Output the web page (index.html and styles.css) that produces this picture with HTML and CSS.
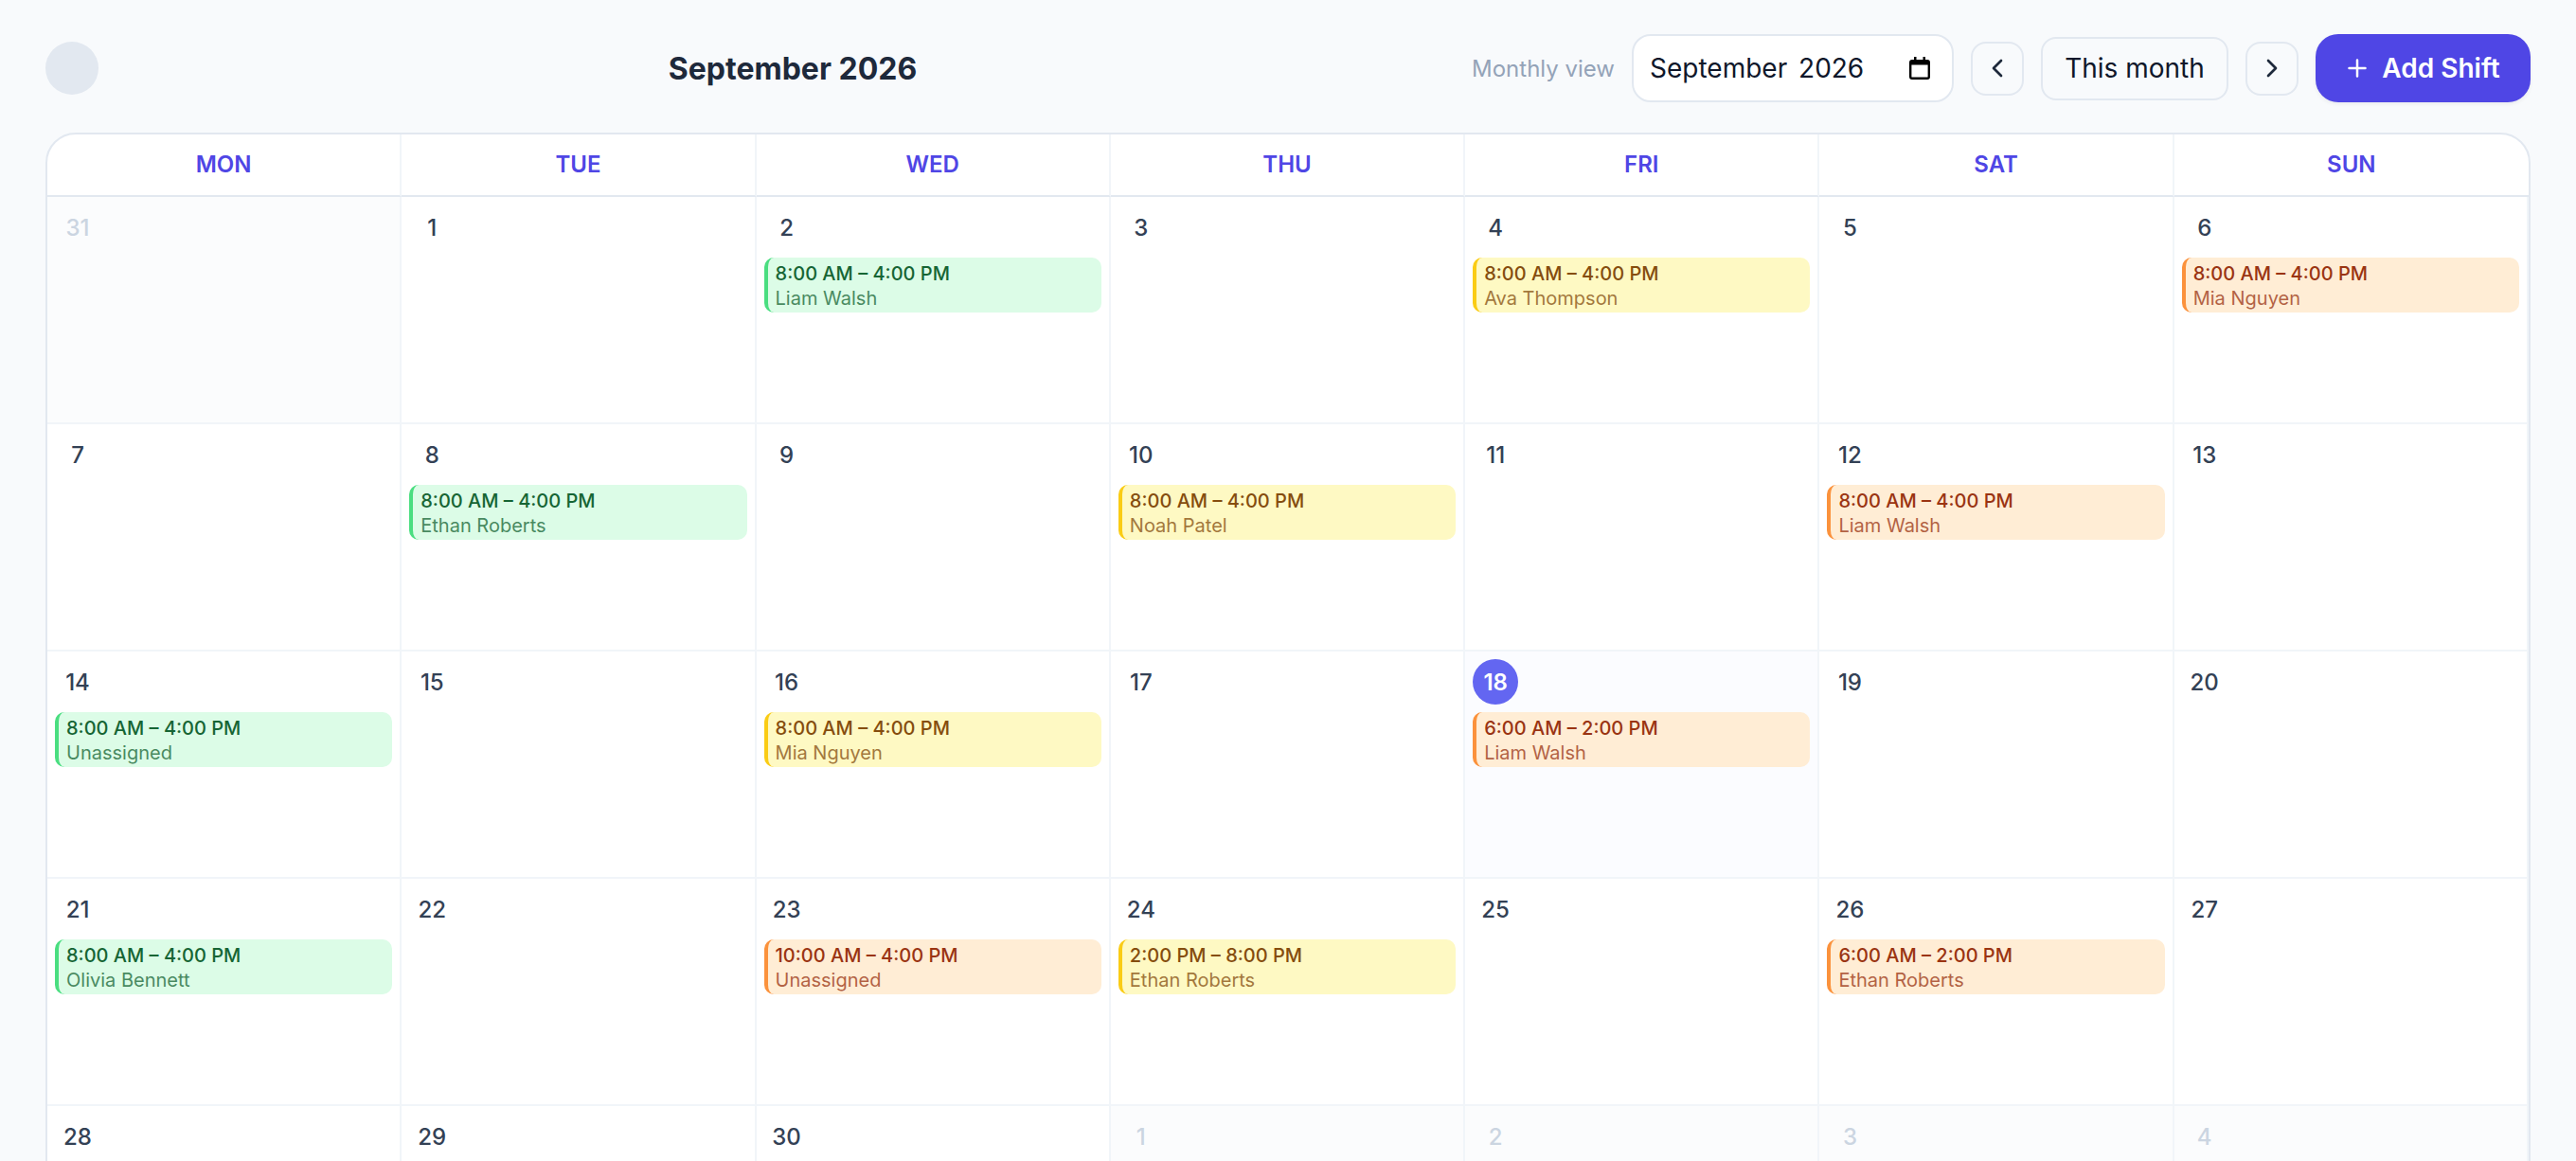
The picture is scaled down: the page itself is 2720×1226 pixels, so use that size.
FILE: index.html

```html
<!DOCTYPE html>
<html lang="en">
<head>
    <meta charset="UTF-8">
    <meta name="viewport" content="width=device-width, initial-scale=1.0">
    <title>Shift Calendar</title>
    <link rel="stylesheet" href="styles.css">
</head>
<body>
    <header class="topbar">
        <div class="avatar"></div>
        <h1 class="month-title">September 2026</h1>
        <div class="controls">
            <span class="view-label">Monthly view</span>
            <div class="month-input">
                <span class="month-value">September 2026</span>
                <svg class="cal-icon" width="22" height="24" viewBox="0 0 22 24"><path d="M5 0h2.5v3h7V0H17v3h2a3 3 0 0 1 3 3v15a3 3 0 0 1-3 3H3a3 3 0 0 1-3-3V6a3 3 0 0 1 3-3h2zM2.4 8.5V21a.6.6 0 0 0 .6.6h16a.6.6 0 0 0 .6-.6V8.5z" fill-rule="evenodd"/></svg>
            </div>
            <button class="nav-btn" aria-label="Previous month">
                <svg width="32" height="32" viewBox="0 0 24 24"><path d="M15 18l-6-6 6-6"/></svg>
            </button>
            <button class="today-btn">This month</button>
            <button class="nav-btn" aria-label="Next month">
                <svg width="32" height="32" viewBox="0 0 24 24"><path d="M9 18l6-6-6-6"/></svg>
            </button>
            <button class="add-btn">
                <svg width="24" height="24" viewBox="0 0 24 24"><path d="M12 3.5v17M3.5 12h17"/></svg>
                Add Shift
            </button>
        </div>
    </header>

    <div class="calendar">
        <div class="day-name">MON</div>
        <div class="day-name">TUE</div>
        <div class="day-name">WED</div>
        <div class="day-name">THU</div>
        <div class="day-name">FRI</div>
        <div class="day-name">SAT</div>
        <div class="day-name">SUN</div>

        <div class="cell outside"><div class="day-num">31</div></div>
        <div class="cell"><div class="day-num">1</div></div>
        <div class="cell"><div class="day-num">2</div>
            <div class="shift green"><div class="shift-time">8:00 AM – 4:00 PM</div><div class="shift-name">Liam Walsh</div></div>
        </div>
        <div class="cell"><div class="day-num">3</div></div>
        <div class="cell"><div class="day-num">4</div>
            <div class="shift yellow"><div class="shift-time">8:00 AM – 4:00 PM</div><div class="shift-name">Ava Thompson</div></div>
        </div>
        <div class="cell"><div class="day-num">5</div></div>
        <div class="cell"><div class="day-num">6</div>
            <div class="shift orange"><div class="shift-time">8:00 AM – 4:00 PM</div><div class="shift-name">Mia Nguyen</div></div>
        </div>

        <div class="cell"><div class="day-num">7</div></div>
        <div class="cell"><div class="day-num">8</div>
            <div class="shift green"><div class="shift-time">8:00 AM – 4:00 PM</div><div class="shift-name">Ethan Roberts</div></div>
        </div>
        <div class="cell"><div class="day-num">9</div></div>
        <div class="cell"><div class="day-num">10</div>
            <div class="shift yellow"><div class="shift-time">8:00 AM – 4:00 PM</div><div class="shift-name">Noah Patel</div></div>
        </div>
        <div class="cell"><div class="day-num">11</div></div>
        <div class="cell"><div class="day-num">12</div>
            <div class="shift orange"><div class="shift-time">8:00 AM – 4:00 PM</div><div class="shift-name">Liam Walsh</div></div>
        </div>
        <div class="cell"><div class="day-num">13</div></div>

        <div class="cell"><div class="day-num">14</div>
            <div class="shift green"><div class="shift-time">8:00 AM – 4:00 PM</div><div class="shift-name">Unassigned</div></div>
        </div>
        <div class="cell"><div class="day-num">15</div></div>
        <div class="cell"><div class="day-num">16</div>
            <div class="shift yellow"><div class="shift-time">8:00 AM – 4:00 PM</div><div class="shift-name">Mia Nguyen</div></div>
        </div>
        <div class="cell"><div class="day-num">17</div></div>
        <div class="cell today"><div class="day-num">18</div>
            <div class="shift orange"><div class="shift-time">6:00 AM – 2:00 PM</div><div class="shift-name">Liam Walsh</div></div>
        </div>
        <div class="cell"><div class="day-num">19</div></div>
        <div class="cell"><div class="day-num">20</div></div>

        <div class="cell"><div class="day-num">21</div>
            <div class="shift green"><div class="shift-time">8:00 AM – 4:00 PM</div><div class="shift-name">Olivia Bennett</div></div>
        </div>
        <div class="cell"><div class="day-num">22</div></div>
        <div class="cell"><div class="day-num">23</div>
            <div class="shift orange"><div class="shift-time">10:00 AM – 4:00 PM</div><div class="shift-name">Unassigned</div></div>
        </div>
        <div class="cell"><div class="day-num">24</div>
            <div class="shift yellow"><div class="shift-time">2:00 PM – 8:00 PM</div><div class="shift-name">Ethan Roberts</div></div>
        </div>
        <div class="cell"><div class="day-num">25</div></div>
        <div class="cell"><div class="day-num">26</div>
            <div class="shift orange"><div class="shift-time">6:00 AM – 2:00 PM</div><div class="shift-name">Ethan Roberts</div></div>
        </div>
        <div class="cell"><div class="day-num">27</div></div>

        <div class="cell"><div class="day-num">28</div></div>
        <div class="cell"><div class="day-num">29</div></div>
        <div class="cell"><div class="day-num">30</div></div>
        <div class="cell outside"><div class="day-num">1</div></div>
        <div class="cell outside"><div class="day-num">2</div></div>
        <div class="cell outside"><div class="day-num">3</div></div>
        <div class="cell outside"><div class="day-num">4</div></div>
    </div>
</body>
</html>
```

FILE: styles.css

```css
html, body {
    height: 100%;
    overflow: hidden;
}
body {
    margin: 0;
    padding: 36px 48px 0;
    box-sizing: border-box;
    background-color: #f8fafc;
    font-family: Inter, "Liberation Sans", sans-serif;
    color: #1e293b;
}
.topbar {
    display: flex;
    align-items: center;
    justify-content: space-between;
    height: 72px;
    margin-bottom: 32px;
}
.avatar {
    width: 56px;
    height: 56px;
    margin-right: 16px;
    border-radius: 50%;
    background-color: #e2e8f0;
}
.month-title {
    margin: 0;
    font-size: 32px;
    font-weight: 700;
    color: #1e293b;
}
.controls {
    display: flex;
    align-items: center;
    gap: 18px;
}
.view-label {
    font-size: 24px;
    color: #94a3b8;
}
.month-input {
    display: flex;
    align-items: center;
    justify-content: space-between;
    box-sizing: border-box;
    width: 340px;
    height: 72px;
    padding: 0 23px 0 17px;
    border: 2px solid #e2e8f0;
    border-radius: 20px;
    background-color: white;
    font-size: 28px;
    color: #0f172a;
}
.month-value {
    word-spacing: 4px;
}
.nav-btn, .today-btn {
    box-sizing: border-box;
    border: 2px solid #e2e8f0;
    border-radius: 16px;
    background-color: #f8fafc;
    color: #0f172a;
    font-family: inherit;
}
.nav-btn {
    display: flex;
    align-items: center;
    justify-content: center;
    width: 56px;
    height: 57px;
    padding: 0;
}
.nav-btn path {
    fill: none;
    stroke: #1e293b;
    stroke-width: 2;
    stroke-linecap: round;
    stroke-linejoin: round;
}
.today-btn {
    width: 198px;
    height: 67px;
    padding: 0;
    font-size: 28px;
}
.add-btn {
    display: flex;
    align-items: center;
    justify-content: center;
    gap: 14px;
    box-sizing: border-box;
    width: 227px;
    height: 72px;
    padding: 0;
    border: none;
    border-radius: 24px;
    background-color: #4f46e5;
    color: white;
    font-family: inherit;
    font-size: 28px;
    font-weight: 600;
    box-shadow: 0 2px 4px rgba(0, 0, 0, 0.06);
}
.add-btn path {
    fill: none;
    stroke: white;
    stroke-width: 2.5;
    stroke-linecap: round;
}
.calendar {
    display: grid;
    grid-template-columns: repeat(7, 1fr);
    grid-auto-rows: 240px;
    grid-template-rows: 66px;
    border: 2px solid #e2e8f0;
    border-radius: 32px 32px 0 0;
    background-color: white;
    overflow: hidden;
}
.day-name {
    display: flex;
    align-items: center;
    justify-content: center;
    padding-bottom: 1px;
    border-right: 2px solid #f1f5f9;
    border-bottom: 2px solid #e2e8f0;
    font-size: 24px;
    font-weight: 600;
    color: #4f46e5;
}
.day-name:nth-child(7) {
    border-right: none;
}
.cell {
    box-sizing: border-box;
    padding: 8px;
    border-right: 2px solid #f1f5f9;
    border-bottom: 2px solid #f1f5f9;
    min-width: 0;
}
.cell.outside {
    background-color: #fbfcfd;
}
.cell.outside .day-num {
    color: #cbd5e1;
}
.cell.today {
    background-color: #fbfcff;
}
.day-num {
    display: flex;
    align-items: center;
    justify-content: center;
    width: 48px;
    height: 48px;
    margin-bottom: 8px;
    font-size: 24px;
    font-weight: 500;
    color: #334155;
}
.today .day-num {
    border-radius: 50%;
    background-color: #6366f1;
    color: white;
    font-weight: 600;
}
.shift {
    box-sizing: border-box;
    height: 58px;
    padding: 4px 10px 2px 8px;
    border-left: 4px solid;
    border-radius: 10px;
    font-size: 20px;
    line-height: 26px;
}
.shift-time {
    font-weight: 500;
}
.shift-name {
    font-weight: 400;
    opacity: 0.75;
}
.green {
    background-color: #dcfce7;
    border-color: #4ade80;
    color: #166534;
}
.yellow {
    background-color: #fef9c3;
    border-color: #facc15;
    color: #854d0e;
}
.orange {
    background-color: #ffedd5;
    border-color: #fb923c;
    color: #9a3412;
}
```
